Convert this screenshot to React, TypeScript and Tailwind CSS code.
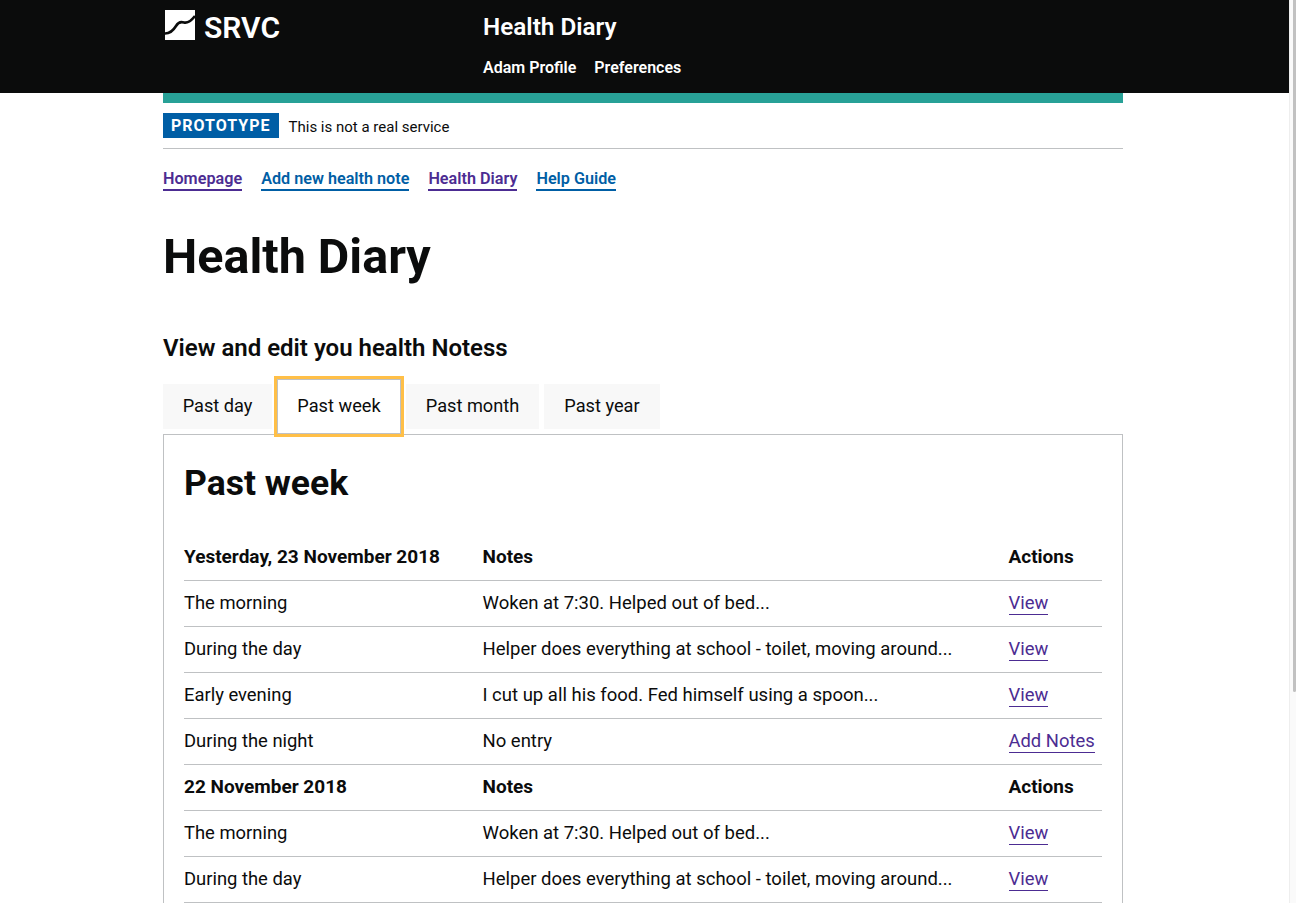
import React from 'react';

const font = "font-['Roboto',sans-serif]";

type Row = { when: string; note: string; action: string };

const Logo = () => (
  <svg width="30" height="30" viewBox="0 0 30 30" className="shrink-0">
    <rect width="30" height="30" fill="#fff" />
    <path d="M0 23.5 C5 23.5 8 21 11 16 C13 12.5 16 11.500 19 12.500 C23 13.500 26 11 30 6" fill="none" stroke="#0b0c0c" strokeWidth="2.6" />
  </svg>
);

const HeaderRow = ({ title }: { title: string }) => (
  <tr className="h-[46px] border-b border-[#bfc1c3] text-[19px] font-bold text-[#0b0c0c]">
    <td className="align-middle">{title}</td>
    <td className="align-middle">Notes</td>
    <td className="align-middle">Actions</td>
  </tr>
);

const BodyRow = ({ when, note, action }: Row) => (
  <tr className="h-[46px] border-b border-[#bfc1c3] text-[18.4px] text-[#0b0c0c]">
    <td className="align-middle">{when}</td>
    <td className="pt-[2px] align-middle text-[18.5px]">{note}</td>
    <td className="align-middle">
      <a href="#" className="border-b border-[#4c2c92] pb-[1px] text-[#4c2c92]">{action}</a>
    </td>
  </tr>
);

const week1: Row[] = [
  { when: 'The morning', note: 'Woken at 7:30. Helped out of bed...', action: 'View' },
  { when: 'During the day', note: 'Helper does everything at school - toilet, moving around...', action: 'View' },
  { when: 'Early evening', note: 'I cut up all his food. Fed himself using a spoon...', action: 'View' },
  { when: 'During the night', note: 'No entry', action: 'Add Notes' },
];

const week2: Row[] = [
  { when: 'The morning', note: 'Woken at 7:30. Helped out of bed...', action: 'View' },
  { when: 'During the day', note: 'Helper does everything at school - toilet, moving around...', action: 'View' },
];

const navLinks = [
  { label: 'Homepage', cls: 'text-[#4c2c92] border-[#4c2c92]' },
  { label: 'Add new health note', cls: 'text-[#005ea5] border-[#005ea5]' },
  { label: 'Health Diary', cls: 'text-[#4c2c92] border-[#4c2c92]' },
  { label: 'Help Guide', cls: 'text-[#005ea5] border-[#005ea5]' },
];

const App: React.FC = () => {
  return (
    <div className={`flex h-[903px] overflow-hidden bg-white ${font}`}>
      <div className="w-[1289px] shrink-0">
        <header className="h-[93px] bg-[#0b0c0c] text-white">
          <div className="ml-[163px] flex w-[960px] pt-[10px]">
            <div className="flex w-[320px] items-start gap-[9px] pl-[2px]">
              <Logo />
              <span className="mt-[1px] text-[30px] font-semibold leading-[33px]">SRVC</span>
            </div>
            <div>
              <div className="text-[24.3px] font-semibold leading-[34px]">Health Diary</div>
              <div className="mt-[12px] flex gap-[18px] text-[16px] font-semibold leading-[24px]">
                <span>Adam Profile</span>
                <span>Preferences</span>
              </div>
            </div>
          </div>
        </header>

        <main className="ml-[163px] w-[960px]">
          <div className="h-[10px] bg-[#28a197]" />
          <div className="flex h-[46px] items-start border-b border-[#bfc1c3] pt-[10px]">
            <span className="bg-[#005ea5] px-2 pt-[1px] text-[16px] font-bold leading-[24px] tracking-[1px] text-white">PROTOTYPE</span>
            <span className="ml-[10px] pt-[1px] text-[15px] leading-[27px] text-[#0b0c0c]">This is not a real service</span>
          </div>

          <nav className="mt-[19px] flex gap-[19px] text-[16.2px] font-semibold leading-[21px]">
            {navLinks.map((l) => (
              <a key={l.label} href="#" className={`border-b-2 ${l.cls}`}>{l.label}</a>
            ))}
          </nav>

          <h1 className="mt-[36px] text-[48.5px] font-bold leading-[60px] text-[#0b0c0c]">Health Diary</h1>
          <h2 className="mt-[46px] text-[24px] font-semibold leading-[30px] text-[#0b0c0c]">View and edit you health Notess</h2>

          <div className="mt-[21px] flex h-[45px] items-start gap-[5px] text-[18.2px] text-[#0b0c0c]">
            <div className="flex h-[45px] w-[109px] items-center justify-center bg-[#f8f8f8] pb-[1px]">Past day</div>
            <div className="relative z-10 -mt-[5px] flex h-[55px] w-[124px] items-center justify-center border border-[#bfc1c3] bg-white pb-[1px] outline-[3px] outline-[#ffbf47]">Past week</div>
            <div className="flex h-[45px] w-[133px] items-center justify-center bg-[#f8f8f8] pb-[1px]">Past month</div>
            <div className="flex h-[45px] w-[116px] items-center justify-center bg-[#f8f8f8] pb-[1px]">Past year</div>
          </div>

          <section className="mt-[5px] h-[600px] border border-[#bfc1c3] px-5 pt-[26px]">
            <h2 className="text-[35.5px] font-bold leading-[45px] text-[#0b0c0c]">Past week</h2>
            <table className="mt-[28px] w-full table-fixed border-collapse">
              <colgroup>
                <col className="w-[298.5px]" />
                <col className="w-[526px]" />
                <col />
              </colgroup>
              <tbody>
                <HeaderRow title="Yesterday, 23 November 2018" />
                {week1.map((r) => <BodyRow key={r.when} {...r} />)}
                <HeaderRow title="22 November 2018" />
                {week2.map((r) => <BodyRow key={r.when} {...r} />)}
              </tbody>
            </table>
          </section>
        </main>
      </div>

      {/* overlay scrollbar */}
      <div className="flex w-[7px] shrink-0 justify-end border-l border-[#eeeeee] bg-[#fafafa]">
        <div className="h-[692px] w-[3px] rounded-b-[2px] bg-[#c1c1c1]" />
      </div>
    </div>
  );
};

export default App;
